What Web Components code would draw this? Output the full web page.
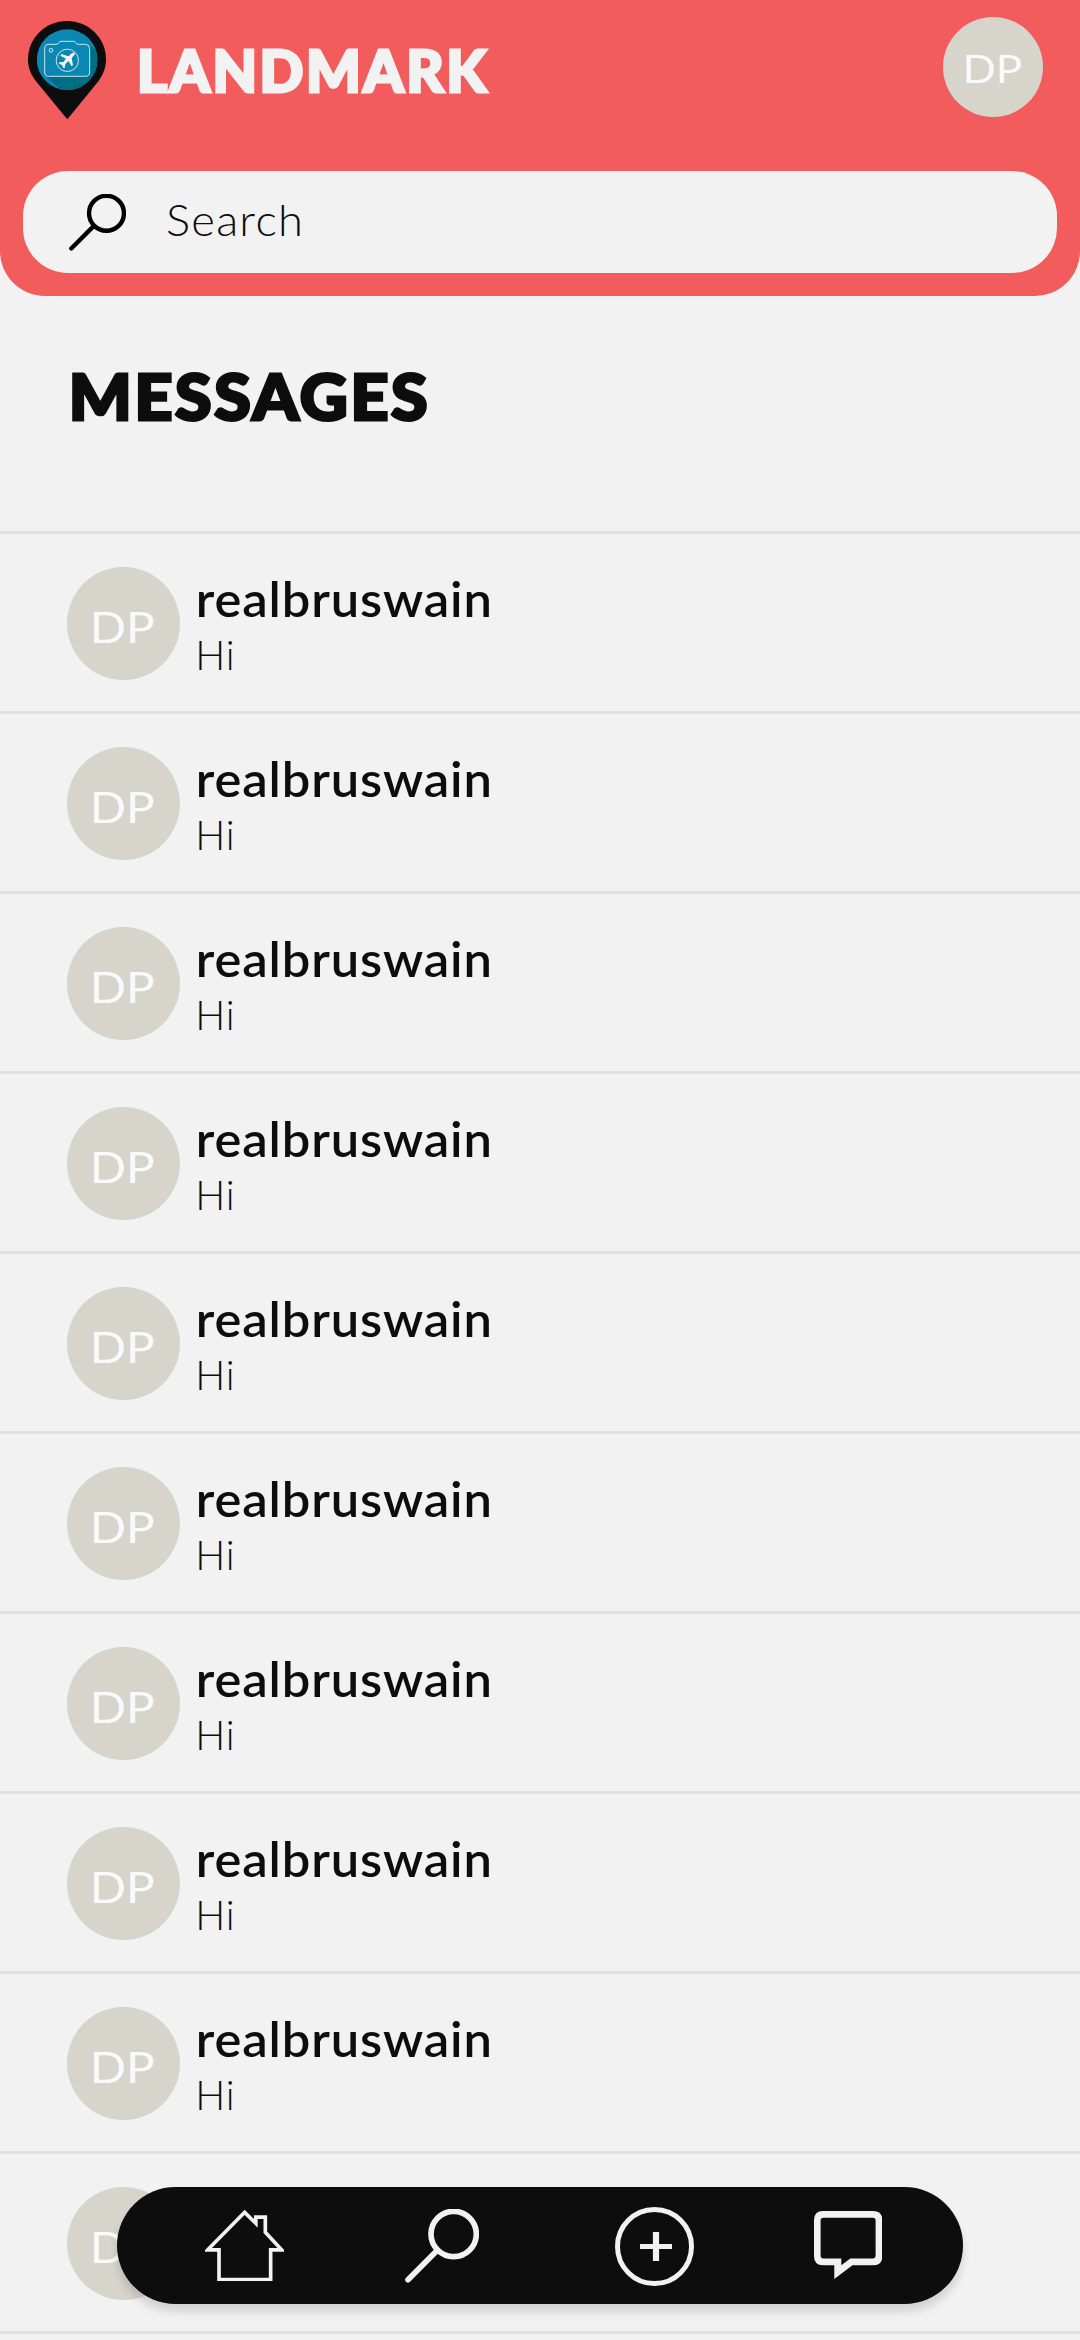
<!DOCTYPE html>
<html lang="en">
<head>
<meta charset="utf-8">
<title>Landmark – Messages</title>
<style>
html,body{margin:0;padding:0;background:#f2f2f2}
body{width:1080px;height:2340px;overflow:hidden;position:relative;font-family:Lato,"Open Sans",sans-serif;color:#0d0d0d}
</style>
</head>
<body>
<landmark-app></landmark-app>
<script>
class Base extends HTMLElement {
  constructor() {
    super();
    this.attachShadow({mode: 'open'}).innerHTML = this.constructor.html;
  }
}
const define = (name, html, cls = class extends Base {}) => {
  cls.html = html;
  customElements.define(name, cls);
};

// A line of text whose capitals are `cap` px tall and whose ink is `w` px wide.
// `track` is the letter spacing. The host box spans cap top to baseline.
const ctx = document.createElement('canvas').getContext('2d');
define('fit-text', `
<style>
:host{display:block;flex:none;white-space:nowrap}
span{display:block;width:max-content;transform-origin:0 0}
</style><span><slot></slot></span>`, class extends Base {
  connectedCallback() {
    const cap = +this.getAttribute('cap'), w = +this.getAttribute('w'), track = +(this.getAttribute('track') || 0);
    const cs = getComputedStyle(this), span = this.shadowRoot.querySelector('span');
    const font = s => ctx.font = `${cs.fontWeight} ${s}px ${cs.fontFamily}`;
    font(1000);
    const size = cap / ctx.measureText('H').actualBoundingBoxAscent * 1000;
    font(size);
    const text = this.textContent, m = ctx.measureText(text);
    const scale = w / (m.actualBoundingBoxRight + m.actualBoundingBoxLeft + track * (text.length - 1));
    const dy = (cap - m.fontBoundingBoxAscent + m.fontBoundingBoxDescent) / 2;
    this.style.width = w + 'px';
    this.style.height = cap + 'px';
    span.style.fontSize = size + 'px';
    span.style.letterSpacing = track + 'px';
    span.style.lineHeight = cap + 'px';
    span.style.transform = `translate(${m.actualBoundingBoxLeft * scale}px,${dy}px) scaleX(${scale})`;
  }
});

define('landmark-logo', `
<style>:host{display:block;width:78px;height:98.3px}svg{display:block;width:100%;height:100%}</style>
<svg viewBox="54 33 234 295">
  <defs><clipPath id="c"><path d="M80 50H263V240H80Z"/></clipPath><clipPath id="d"><circle cx="171.500" cy="149" r="91"/></clipPath></defs>
  <path fill="#0d0d0d" d="M171 33C236 33 288 84 288 148C288 176 278 196 264 215L172 328L79 215C64 196 54 176 54 148C54 84 106 33 171 33Z"/>
  <g clip-path="url(#c)">
    <circle cx="171.500" cy="149" r="91" fill="#0a87b2"/>
    <path clip-path="url(#d)" fill="#006f86" d="M240 106L280 146V250H162L108 199H232Q240 197 240 189Z"/>
  </g>
  <g fill="none" stroke="#eef5f7" stroke-width="2.600">
    <path d="M117 103H138Q146 102 147 98Q148 94 153 94H191Q196 94 197 98Q198 103 206 103H227Q239 104 239 116V186Q239 199 227 199H116Q104 199 104 186V116Q104 103 117 103Z"/>
    <circle cx="172" cy="151" r="33.500"/><circle cx="123" cy="121" r="5.500"/>
  </g>
  <path fill="#f5f5f5" d="M194 128C189 126 184 130 180 135L175 139L154 132L151 137L168 146L160 156L148 157L147 161L156 165L160 174L164 174L166 162L176 153L184 168L189 166L185 144L190 139Q196 133 194 128Z"/>
</svg>`);

define('search-icon', `
<style>:host{display:block;flex:none}svg{display:block;width:100%;height:100%}</style>
<svg viewBox="45 57 222 222" fill="none" stroke="currentColor" stroke-width="17">
  <circle cx="191" cy="132" r="68"/><path d="M142 181L54 269" stroke-linecap="round"/>
</svg>`);

define('user-avatar', `
<style>
:host{display:flex;flex:none;justify-content:center;align-items:flex-start;box-sizing:border-box;border-radius:50%;background:#d7d4cc;color:#fafafa;font-weight:400}
</style><slot></slot>`);

define('search-field', `
<style>
:host{display:flex;box-sizing:border-box;height:102px;margin:0 23px;padding-left:46px;border-radius:45px;background:#f2f2f2}
search-icon{width:57px;height:57px;margin-top:23px;color:#000}
fit-text{margin:35px 0 0 41px;font-weight:300}
</style><search-icon></search-icon><fit-text cap="30.500" w="133.500" track="1.2">Search</fit-text>`);

define('app-header', `
<style>
:host{display:flex;flex-direction:column;box-sizing:border-box;height:296px;border-radius:0 0 45px 45px;background:#f25c5c}
.top{display:flex;height:171px;box-sizing:border-box;padding:17px 37px 0 28px;align-items:flex-start}
landmark-logo{margin-top:4px}
.brand{margin:32.500px auto 0 35px;color:#f2f2f2;font-weight:900;-webkit-text-stroke:3px #f2f2f2}
user-avatar{width:100px;height:100px;padding-top:39px}
</style>
<div class="top"><landmark-logo></landmark-logo><fit-text class="brand" cap="42" w="346.500" track="2.5">LANDMARK</fit-text>
<user-avatar><fit-text cap="27.500" w="55">DP</fit-text></user-avatar></div>
<search-field></search-field>`);

define('message-row', `
<style>
:host{display:flex;box-sizing:border-box;height:180px;padding:33px 0 0 67px;border-bottom:3px solid #e0e0e0}
user-avatar{width:113px;height:113px;padding-top:45.500px}
.copy{display:flex;flex-direction:column;padding:14.500px 0 0 18.500px}
</style>
<user-avatar><fit-text cap="30.500" w="61">DP</fit-text></user-avatar>
<div class="copy"><slot name="name"></slot><slot name="text"></slot></div>`);

define('message-list', `
<style>
:host{display:block;border-top:3px solid #e0e0e0}
.name{font-weight:600}
.text{font-weight:300;margin-top:23.500px}
</style>
${`<message-row><fit-text slot="name" class="name" cap="35" w="290" track="0.8">realbruswain</fit-text><fit-text slot="text" class="text" cap="30" w="33.500" track="1">Hi</fit-text></message-row>`.repeat(10)}`);

define('nav-bar', `
<style>
:host{position:absolute;left:117px;top:2187px;display:flex;align-items:flex-start;box-sizing:border-box;width:846px;height:117px;padding-left:88px;border-radius:58.500px;background:#0d0d0d;color:#f2f2f2;box-shadow:0 8px 9px rgba(0,0,0,.13)}
svg{display:block;flex:none}
.home{margin-top:22.700px}
search-icon{width:74px;height:74px;margin:22px 0 0 121px}
.add{margin:20px 0 0 136px}
.chat{margin:24px 0 0 120px}
</style>
<svg class="home" width="79" height="71.300" viewBox="45 59 237 214" fill="none" stroke="currentColor" stroke-width="11"><path d="M164 66L53 178.500H87V267.500H242V178.500H275L226 126V80.500H197.500V99Z"/></svg>
<search-icon></search-icon>
<svg class="add" width="79" height="79" viewBox="0 0 79 79" fill="none" stroke="currentColor"><circle cx="39.500" cy="39.500" r="37" stroke-width="5"/><path d="M25 39.500H57" stroke-width="5"/><path d="M41 25V54" stroke-width="6.200"/></svg>
<svg class="chat" width="68.300" height="68" viewBox="0 0 68.300 68" fill="currentColor" fill-rule="evenodd"><path d="M9 0H59.300Q68.300 0 68.300 9V45.300Q68.300 54.300 59.300 54.300H38.500L20.300 68V54.300H9Q0 54.300 0 45.300V9Q0 0 9 0ZM9.500 6.700Q6.600 6.700 6.600 9.500V44.500Q6.600 47.500 9.500 47.500H27.300V54.300L36.300 47.500H58.800Q61.600 47.500 61.600 44.500V9.500Q61.600 6.700 58.800 6.700Z"/></svg>`);

define('landmark-app', `
<style>
:host{display:flex;flex-direction:column;height:2340px;overflow:hidden}
.title{margin:78px 0 111px 72.500px;font-weight:900;-webkit-text-stroke:3px #0d0d0d}
</style>
<app-header></app-header>
<fit-text class="title" cap="46" w="353" track="2.5">MESSAGES</fit-text>
<message-list></message-list>
<nav-bar></nav-bar>`);
</script>
</body>
</html>
